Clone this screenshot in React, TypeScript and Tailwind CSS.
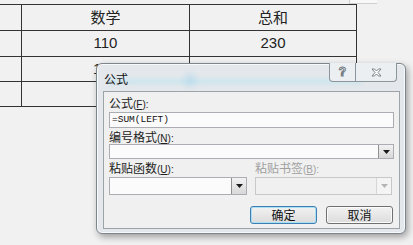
import React from "react"

const cjk = "font-['Microsoft_YaHei','Noto_Sans_CJK_SC',sans-serif]"

const rows = [
  { a: "数学", b: "总和", h: "h-[26px]" },
  { a: "110", b: "230", h: "h-[26px]" },
  { a: "100", b: "", h: "h-[25px]" },
  { a: "1", b: "", h: "h-[25px]" },
]

function Arrow({ disabled }: { disabled?: boolean }) {
  return (
    <div
      className={`flex w-[15px] items-center justify-center border-l ${
        disabled ? "border-[#d6d6d6] bg-[#f4f4f4]" : "border-[#8e8f8f] bg-gradient-to-b from-[#f2f2f2] to-[#d8d8d8]"
      }`}
    >
      <svg width="7" height="4" viewBox="0 0 7 4">
        <path d="M0 0h7L3.5 4z" fill={disabled ? "#b4b4b4" : "#1a1a1a"} />
      </svg>
    </div>
  )
}

function Select({ className, disabled }: { className: string; disabled?: boolean }) {
  return (
    <div
      className={`flex border ${disabled ? "border-[#c8c8c8] bg-[#f0f0f0]" : "border-[#abadb3] bg-[#fbfbfb]"} ${className}`}
    >
      <div className="flex-1" />
      <Arrow disabled={disabled} />
    </div>
  )
}

function Label({ text, k, grey }: { text: string; k: string; grey?: boolean }) {
  return (
    <div className={`h-[14px] text-[12px] leading-[14px] ${grey ? "text-[#a0a0a0]" : "text-[#222]"} ${cjk}`}>
      {text}
      <span className="font-['Liberation_Sans',sans-serif] text-[10px]">
        (<span className="underline">{k}</span>):
      </span>
    </div>
  )
}

function Dialog() {
  return (
    <div className="absolute left-[96px] top-[63px] flex h-[171px] w-[310px] flex-col rounded-[6px] border border-[#7e868d] bg-[#e4e8ec] px-[6px] pb-[4px] pl-[6px] pr-[5px] shadow-[inset_0_0_0_1px_rgba(255,255,255,0.75),2px_3px_7px_rgba(0,0,0,0.35)]">
      {/* aero glow */}
      <div className="pointer-events-none absolute left-[10px] top-[15px] h-[5px] w-[255px] rounded-full bg-[rgba(170,225,240,0.45)] blur-[2px]" />
      <div className="pointer-events-none absolute left-[88px] top-[9px] h-[14px] w-[10px] rounded-full bg-[rgba(150,205,235,0.35)] blur-[3px]" />

      <div className={`relative flex h-[27px] items-center pl-[1px] pt-[2px] text-[12px] text-[#111] ${cjk}`}>公式</div>

      <div className="absolute right-[8px] top-[-1px] flex h-[19px] overflow-hidden rounded-b-[4px] border border-t-0 border-[#8d959c] bg-[#eceff2]">
        <div className="flex w-[26px] items-center justify-center border-r border-[#8d959c] font-['Liberation_Sans',sans-serif] text-[12px] font-bold leading-none text-white [-webkit-text-stroke:1px_#6f777e]">
          ?
        </div>
        <div className="flex w-[40px] items-center justify-center">
          <svg width="11" height="9" viewBox="0 0 11 9">
            <path
              d="M1 1h2.5l2 2 2-2H10L7 4.5 10 8H7.5l-2-2-2 2H1l3-3.5z"
              fill="#fff"
              stroke="#6f777e"
              strokeWidth="0.9"
              strokeLinejoin="round"
            />
          </svg>
        </div>
      </div>

      <div className="flex flex-1 flex-col border border-[#9ca3a9] bg-[#f0f0f0] px-[5px]">
        <div className="mt-[4px]">
          <Label text="公式" k="F" />
        </div>
        <div className="mt-[2px] flex h-[16px] items-center border border-[#abadb3] bg-[#fbfbfb] pl-[2px] font-['Liberation_Mono',monospace] text-[9.5px] text-[#111]">
          =SUM(LEFT)
        </div>
        <div className="mt-[2px]">
          <Label text="编号格式" k="N" />
        </div>
        <Select className="h-[15px] w-full" />
        <div className="mt-[2px] flex gap-[8px]">
          <div className="w-[138px]">
            <Label text="粘贴函数" k="U" />
          </div>
          <div className="flex-1">
            <Label text="粘贴书签" k="B" grey />
          </div>
        </div>
        <div className="mt-[2px] flex gap-[8px]">
          <Select className="h-[18px] w-[138px]" />
          <Select className="h-[18px] w-[137px]" disabled />
        </div>
        <div className="mr-[1px] mt-[11px] flex justify-end gap-[9px]">
          <div
            className={`flex h-[18px] w-[67px] items-center justify-center rounded-[3px] border border-[#3c7fb1] bg-gradient-to-b from-[#f2f2f2] to-[#dcdcdc] text-[12px] text-[#111] shadow-[inset_0_0_0_1px_#a9e0f7] ${cjk}`}
          >
            确定
          </div>
          <div
            className={`flex h-[18px] w-[67px] items-center justify-center rounded-[3px] border border-[#707070] bg-gradient-to-b from-[#f2f2f2] to-[#dcdcdc] text-[12px] text-[#111] shadow-[inset_0_0_0_1px_#fbfbfb] ${cjk}`}
          >
            取消
          </div>
        </div>
      </div>
    </div>
  )
}

export default function App() {
  return (
    <div className="relative h-[245px] w-[413px] overflow-hidden bg-[#f1f1f1]">
      <div className="absolute left-[349px] top-0 h-[4px] w-[28px] border-b border-l border-[#cfcfcf] bg-[#f8f8f8]" />
      <div className="w-[357px] pt-[4px]">
        <div className="border-t border-[#333]">
          {rows.map((r, i) => (
            <div key={i} className={`flex border-b border-[#333] ${r.h}`}>
              <div className="w-[22px] border-r border-[#333]" />
              <div
                className={`flex w-[168px] items-center justify-center border-r border-[#333] text-[15px] text-[#222] ${
                  i === 0 ? cjk : "font-['Liberation_Sans',sans-serif]"
                }`}
              >
                {r.a}
              </div>
              <div
                className={`flex w-[167px] items-center justify-center border-r border-[#333] text-[15px] text-[#222] ${
                  i === 0 ? cjk : "font-['Liberation_Sans',sans-serif]"
                }`}
              >
                {r.b}
              </div>
            </div>
          ))}
        </div>
      </div>
      <Dialog />
    </div>
  )
}
